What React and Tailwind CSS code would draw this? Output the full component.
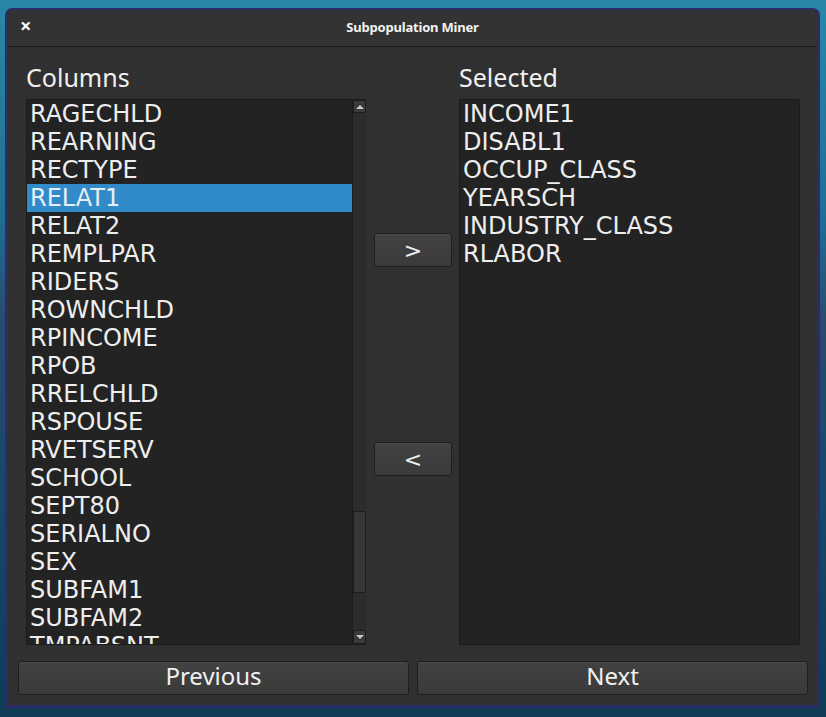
import React from 'react'

const COLUMNS = [
  'RAGECHLD', 'REARNING', 'RECTYPE', 'RELAT1', 'RELAT2', 'REMPLPAR', 'RIDERS',
  'ROWNCHLD', 'RPINCOME', 'RPOB', 'RRELCHLD', 'RSPOUSE', 'RVETSERV', 'SCHOOL',
  'SEPT80', 'SERIALNO', 'SEX', 'SUBFAM1', 'SUBFAM2', 'TMPABSNT',
]

const SELECTED = ['INCOME1', 'DISABL1', 'OCCUP_CLASS', 'YEARSCH', 'INDUSTRY_CLASS', 'RLABOR']

const LIST_FONT = { fontFamily: '"DejaVu Sans", sans-serif' }

function Item({ label, active }) {
  return (
    <div
      className={[
        'h-[28px] leading-[28px] pl-[3px] text-[24px] whitespace-nowrap',
        active ? 'bg-[#308bc8] text-[#e6eef6]' : 'text-[#eeeeee]',
      ].join(' ')}
    >
      {label}
    </div>
  )
}

function ScrollBar() {
  return (
    <div className="w-[14px] flex flex-col bg-[#2c2c2c] border-l border-[#1e1e1e]">
      <div className="h-[13px] bg-[#3a3a3a] border border-[#1c1c1c] flex items-center justify-center">
        <div className="w-0 h-0 border-l-[4px] border-r-[4px] border-b-[4px] border-l-transparent border-r-transparent border-b-[#c8c8c8]" />
      </div>
      <div className="h-[398px]" />
      <div className="h-[82px] bg-[#363636] border border-[#1c1c1c]" />
      <div className="flex-1" />
      <div className="h-[14px] bg-[#3a3a3a] border border-[#1c1c1c] flex items-center justify-center">
        <div className="w-0 h-0 border-l-[4px] border-r-[4px] border-t-[4px] border-l-transparent border-r-transparent border-t-[#c8c8c8]" />
      </div>
    </div>
  )
}

function Btn({ children, className = '' }) {
  return (
    <button
      className={[
        'h-[34px] rounded-[3px] border border-[#1e1e1e] bg-[linear-gradient(#424242,#3a3a3a)] text-[#f0f0f0] shadow-[inset_0_1px_0_#4a4a4a]',
        className,
      ].join(' ')}
    >
      {children}
    </button>
  )
}

export default function App() {
  return (
    <div
      className="w-[826px] h-[717px] overflow-hidden pt-[8px] pl-[5px] bg-[linear-gradient(180deg,#2a87a8_0%,#1f6f93_30%,#2a4a6e_45%,#17476a_70%,#0f3b56_100%)]"
      style={{ fontFamily: '"Noto Sans", "Open Sans", sans-serif' }}
    >
      <div className="w-[815px] h-[700px] border-[3px] border-t-[2px] border-[#2c2c6a] rounded-t-[7px] bg-[#303030] flex flex-col">
        {/* ── Title bar ── */}
        <div className="h-[37px] border-b border-[#1c1c1c] bg-[#333333] rounded-t-[5px] relative flex items-center justify-center">
          <span className="absolute left-[12px] top-[4px] text-[20px] leading-[24px] font-bold text-white">×</span>
          <span className="text-[13px] font-bold text-[#f2f2f2] tracking-[-0.2px]">Subpopulation Miner</span>
        </div>

        {/* ── Lists ── */}
        <div className="flex pl-[18px] pt-[14px] gap-[8px]">
          <div className="w-[340px] flex flex-col">
            <div className="h-[38px] text-[25px] text-[#f0f0f0] leading-[32px]">Columns</div>
            <div className="h-[546px] flex bg-[#232323] border-t border-l border-b border-[#1c1c1c]" style={LIST_FONT}>
              <div className="flex-1 overflow-hidden">
                {COLUMNS.map((c) => (
                  <Item key={c} label={c} active={c === 'RELAT1'} />
                ))}
              </div>
              <ScrollBar />
            </div>
          </div>

          <div className="w-[78px] flex flex-col pt-[172px]" style={LIST_FONT}>
            <Btn className="text-[22px]">&gt;</Btn>
            <Btn className="text-[22px] mt-[175px]">&lt;</Btn>
          </div>

          <div className="w-[341px] ml-[-1px] flex flex-col">
            <div className="h-[38px] text-[25px] text-[#f0f0f0] leading-[32px]">Selected</div>
            <div className="h-[546px] bg-[#232323] border border-[#1c1c1c] overflow-hidden" style={LIST_FONT}>
              {SELECTED.map((c) => (
                <Item key={c} label={c} />
              ))}
            </div>
          </div>
        </div>

        {/* ── Footer buttons ── */}
        <div className="flex gap-[8px] pl-[10px] pt-[16px]">
          <Btn className="w-[391px] text-[24px] leading-[28px] pb-[4px]">Previous</Btn>
          <Btn className="w-[391px] text-[24px] leading-[28px] pb-[4px]">Next</Btn>
        </div>
      </div>
    </div>
  )
}
